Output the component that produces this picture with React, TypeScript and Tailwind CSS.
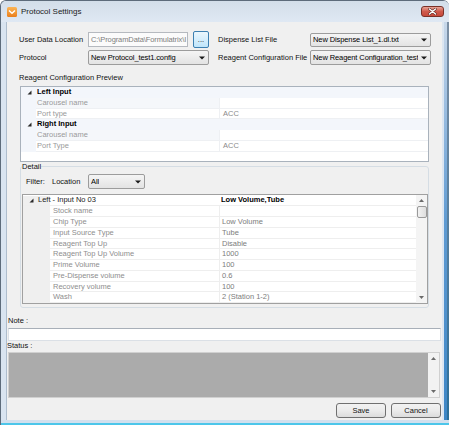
import type { ReactNode } from 'react'

type Row = { name: string; value?: string; shade?: boolean }

const previewRows: Array<{ title: string; rows: Row[] }> = [
  {
    title: 'Left Input',
    rows: [
      { name: 'Carousel name', value: '', shade: true },
      { name: 'Port type', value: 'ACC' }
    ]
  },
  {
    title: 'Right Input',
    rows: [
      { name: 'Carousel name', value: '', shade: true },
      { name: 'Port Type', value: 'ACC' }
    ]
  }
]

const detailRows: Row[] = [
  { name: 'Stock name', value: '' },
  { name: 'Chip Type', value: 'Low Volume' },
  { name: 'Input Source Type', value: 'Tube' },
  { name: 'Reagent Top Up', value: 'Disable' },
  { name: 'Reagent Top Up Volume', value: '1000' },
  { name: 'Prime Volume', value: '100' },
  { name: 'Pre-Dispense volume', value: '0.6' },
  { name: 'Recovery volume', value: '100' },
  { name: 'Wash', value: '2 (Station 1-2)' }
]

function DropArrow() {
  return (
    <svg width="6" height="4" viewBox="0 0 6 4" className="shrink-0">
      <path d="M0 0.5h6L3 3.5z" fill="#1a1a1a" />
    </svg>
  )
}

function Expand() {
  return (
    <svg width="5" height="5" viewBox="0 0 5 5">
      <path d="M4.5 0.5V4.5H0.5z" fill="#2a2a2a" />
    </svg>
  )
}

function ScrollGlyph({ up }: { up?: boolean }) {
  return (
    <svg width="5" height="3" viewBox="0 0 5 3">
      <path d={up ? 'M0 3h5L2.5 0z' : 'M0 0h5L2.5 3z'} fill="#6a6a6a" />
    </svg>
  )
}

function Combo({ text, className }: { text: string; className: string }) {
  return (
    <div
      className={`flex items-center justify-between rounded-[2px] border border-[#9c9c9c] bg-linear-to-b from-[#f5f5f5] to-[#e3e3e3] pl-[2px] pr-[3px] ${className}`}
    >
      <span className="overflow-hidden whitespace-nowrap tracking-[-0.1px]">{text}</span>
      <DropArrow />
    </div>
  )
}

function Label({ children, className = '' }: { children: ReactNode; className?: string }) {
  return <span className={`whitespace-nowrap text-[#111] ${className}`}>{children}</span>
}

function WinButton({ children }: { children: ReactNode }) {
  return (
    <div className="flex h-[15px] w-[50px] items-center justify-center rounded-[3px] border border-[#707070] bg-linear-to-b from-[#f2f2f2] via-[#ebebeb] to-[#dcdcdc] text-[#111]">
      {children}
    </div>
  )
}

function PreviewGrid() {
  return (
    <div className="ml-[13px] mt-[3px] h-[76px] w-[409px] overflow-hidden border border-[#a9b2bc] bg-white leading-[10.75px]">
      {previewRows.map((cat) => (
        <div key={cat.title}>
          <div className="flex h-[10.75px] items-center bg-[#f3f6fb]">
            <div className="flex w-[15px] justify-center pl-[2px]">
              <Expand />
            </div>
            <span className="pl-[1px] font-bold text-black">{cat.title}</span>
          </div>
          {cat.rows.map((r) => (
            <div key={cat.title + r.name} className="flex h-[10.75px]">
              <div className="w-[15px] bg-[#f3f6fb]" />
              <div
                className={`w-[183px] border-b border-[#eef0f3] pl-[1px] text-[#9a9a9a] ${r.shade ? 'bg-[#f5f7fa]' : 'bg-white'}`}
              >
                {r.name}
              </div>
              <div className="flex-1 border-b border-l border-[#eef0f3] pl-[3px] text-[#8a8a8a]">{r.value}</div>
            </div>
          ))}
        </div>
      ))}
    </div>
  )
}

function DetailGrid() {
  return (
    <div className="ml-[1px] mt-[5px] flex h-[110px] w-[406px] overflow-hidden border border-[#a0a0a0] bg-white leading-[10.75px]">
      <div className="flex-1 overflow-hidden pt-[0.5px]">
        <div className="flex h-[10.75px] items-center border-b border-[#eeeeee] bg-[linear-gradient(to_right,#efefef_27px,#ffffff_27px)]">
          <div className="flex w-[15px] justify-center pl-[1px]">
            <Expand />
          </div>
          <span className="w-[181px] whitespace-nowrap text-[#1a1a1a]">Left - Input No 03</span>
          <span className="pl-[2px] font-bold text-black">Low Volume,Tube</span>
        </div>
        {detailRows.map((r) => (
          <div key={r.name} className="flex h-[10.75px]">
            <div className="w-[27px] bg-[#efefef]" />
            <div className="w-[169px] whitespace-nowrap border-b border-[#eeeeee] pl-[3px] text-[#8e8e8e]">{r.name}</div>
            <div className="flex-1 whitespace-nowrap border-b border-l border-[#eeeeee] pl-[2px] text-[#7c7c7c]">
              {r.value}
            </div>
          </div>
        ))}
      </div>
      <div className="flex w-[11px] flex-col items-center bg-[#f4f4f4]">
        <div className="flex h-[11px] items-center">
          <ScrollGlyph up />
        </div>
        <div className="h-[12px] w-[10px] rounded-[2px] border border-[#9a9a9a] bg-linear-to-r from-[#f2f2f2] to-[#dedede]" />
        <div className="flex-1" />
        <div className="flex h-[11px] items-center">
          <ScrollGlyph />
        </div>
      </div>
    </div>
  )
}

export default function App() {
  return (
    <div className="flex h-[425px] w-[449px] flex-col overflow-hidden rounded-t-[6px] border-l border-t border-[#5d6b7a] bg-[#d9e4f0] text-[7.5px] [font-family:'Liberation_Sans',Arial,sans-serif]">
      {/* title bar */}
      <div className="flex h-[21px] shrink-0 items-center bg-linear-to-b from-[#d3dee9] to-[#dfe8f3] pl-[6px] pr-[5px]">
        <svg width="10" height="10" viewBox="0 0 10 10">
          <defs>
            <linearGradient id="ico" x1="0" y1="0" x2="0" y2="1">
              <stop offset="0" stopColor="#fbb555" />
              <stop offset="1" stopColor="#ea7f1c" />
            </linearGradient>
          </defs>
          <rect x="0" y="0" width="10" height="10" rx="1.5" fill="url(#ico)" />
          <path d="M2 3.5L5 6.3L8 3.5" fill="none" stroke="#fff" strokeWidth="1.4" />
        </svg>
        <span className="ml-[4px] text-[8px] text-[#1b1b1b]">Protocol Settings</span>
        <div className="flex-1" />
        <div className="flex h-[11px] w-[23px] items-center justify-center rounded-[3px] border border-[#7a3128] bg-linear-to-b from-[#e7a396] via-[#cf5a4c] to-[#c8493a]">
          <svg width="9" height="7" viewBox="0 0 9 7">
            <path d="M1.5 1L7.5 6M7.5 1L1.5 6" stroke="#5a2620" strokeWidth="2.6" strokeLinecap="round" />
            <path d="M1.5 1L7.5 6M7.5 1L1.5 6" stroke="#ffffff" strokeWidth="1.5" strokeLinecap="round" />
          </svg>
        </div>
      </div>

      <div className="flex flex-1">
        <div className="w-[6px] border-r border-[#aebdcd]" />

        {/* client */}
        <div className="flex h-[398px] w-[435px] flex-col bg-[#f0f0f0]">
          <div className="mt-[9px] flex h-[17px] items-center pl-[12px]">
            <Label className="w-[69px]">User Data Location</Label>
            <div className="flex h-[15px] w-[100px] items-center overflow-hidden whitespace-nowrap border border-[#b5b9bf] bg-[#fbfbfb] pl-[2px] tracking-[-0.1px] text-[#7d7d7d]">
              C:\ProgramData\Formulatrix\I
            </div>
            <div className="ml-[5px] flex h-[17px] w-[16px] items-end justify-center rounded-[2px] border border-[#3c7fb1] bg-linear-to-b from-[#eaf6fd] to-[#bfe5fb] pb-[4px] leading-none text-[#111]">
              ...
            </div>
            <Label className="ml-[9px] w-[92px]">Dispense List File</Label>
            <Combo text="New Dispense List_1.dl.txt" className="h-[14px] w-[121px]" />
          </div>

          <div className="mt-[1px] flex h-[17px] items-center pl-[12px]">
            <Label className="w-[69px]">Protocol</Label>
            <Combo text="New Protocol_test1.config" className="h-[15px] w-[121px]" />
            <Label className="ml-[9px] w-[92px]">Reagent Configuration File</Label>
            <Combo text="New Reagent Configuration_test" className="h-[15px] w-[121px]" />
          </div>

          <div className="mt-[7px] h-[10px] pl-[12px] leading-[10px]">
            <Label>Reagent Configuration Preview</Label>
          </div>

          <PreviewGrid />

          <fieldset className="ml-[13px] w-[409px] rounded-[3px] border border-[#d5dde4] pb-[3px]">
            <legend className="ml-[1px] h-[9px] leading-[9px] text-[#111]">Detail</legend>
            <div className="mt-[3px] flex h-[15px] items-center pl-[5px]">
              <Label className="w-[26px]">Filter:</Label>
              <Label className="w-[36px]">Location</Label>
              <Combo text="All" className="h-[15px] w-[57px]" />
            </div>
            <DetailGrid />
          </fieldset>

          <div className="ml-[1px] mt-[8px] h-[10px] leading-[10px]">
            <Label>Note :</Label>
          </div>
          <div className="ml-[1px] mt-[2px] h-[13px] w-[433px] border border-[#dbe0e6] border-t-[#a8afb8] bg-white" />

          <div className="h-[10px] leading-[10px]">
            <Label>Status :</Label>
          </div>
          <div className="ml-[1px] mt-[1px] flex h-[46px] w-[432px] border border-[#d0d0d0] bg-white">
            <div className="flex-1 bg-[#ababab]" />
            <div className="flex w-[11px] flex-col items-center justify-between bg-[#f2f2f2] py-[4px]">
              <ScrollGlyph up />
              <ScrollGlyph />
            </div>
          </div>

          <div className="mt-[5px] flex justify-end gap-[5px] pr-[1px]">
            <WinButton>Save</WinButton>
            <WinButton>Cancel</WinButton>
          </div>
        </div>

        <div className="flex w-[7px]">
          <div className="w-[2px] bg-[#dce6f1]" />
          <div className="w-[3px] bg-linear-to-b from-[#c8d8ea] via-[#5f9bd3] to-[#3d86c6]" />
          <div className="w-[2px] bg-linear-to-b from-[#7c8fa4] to-[#2b6f99]" />
        </div>
      </div>

      <div className="h-[5px] shrink-0 border-b-[2px] border-[#4cc6ea] bg-[#d2e0ee]" />
    </div>
  )
}
